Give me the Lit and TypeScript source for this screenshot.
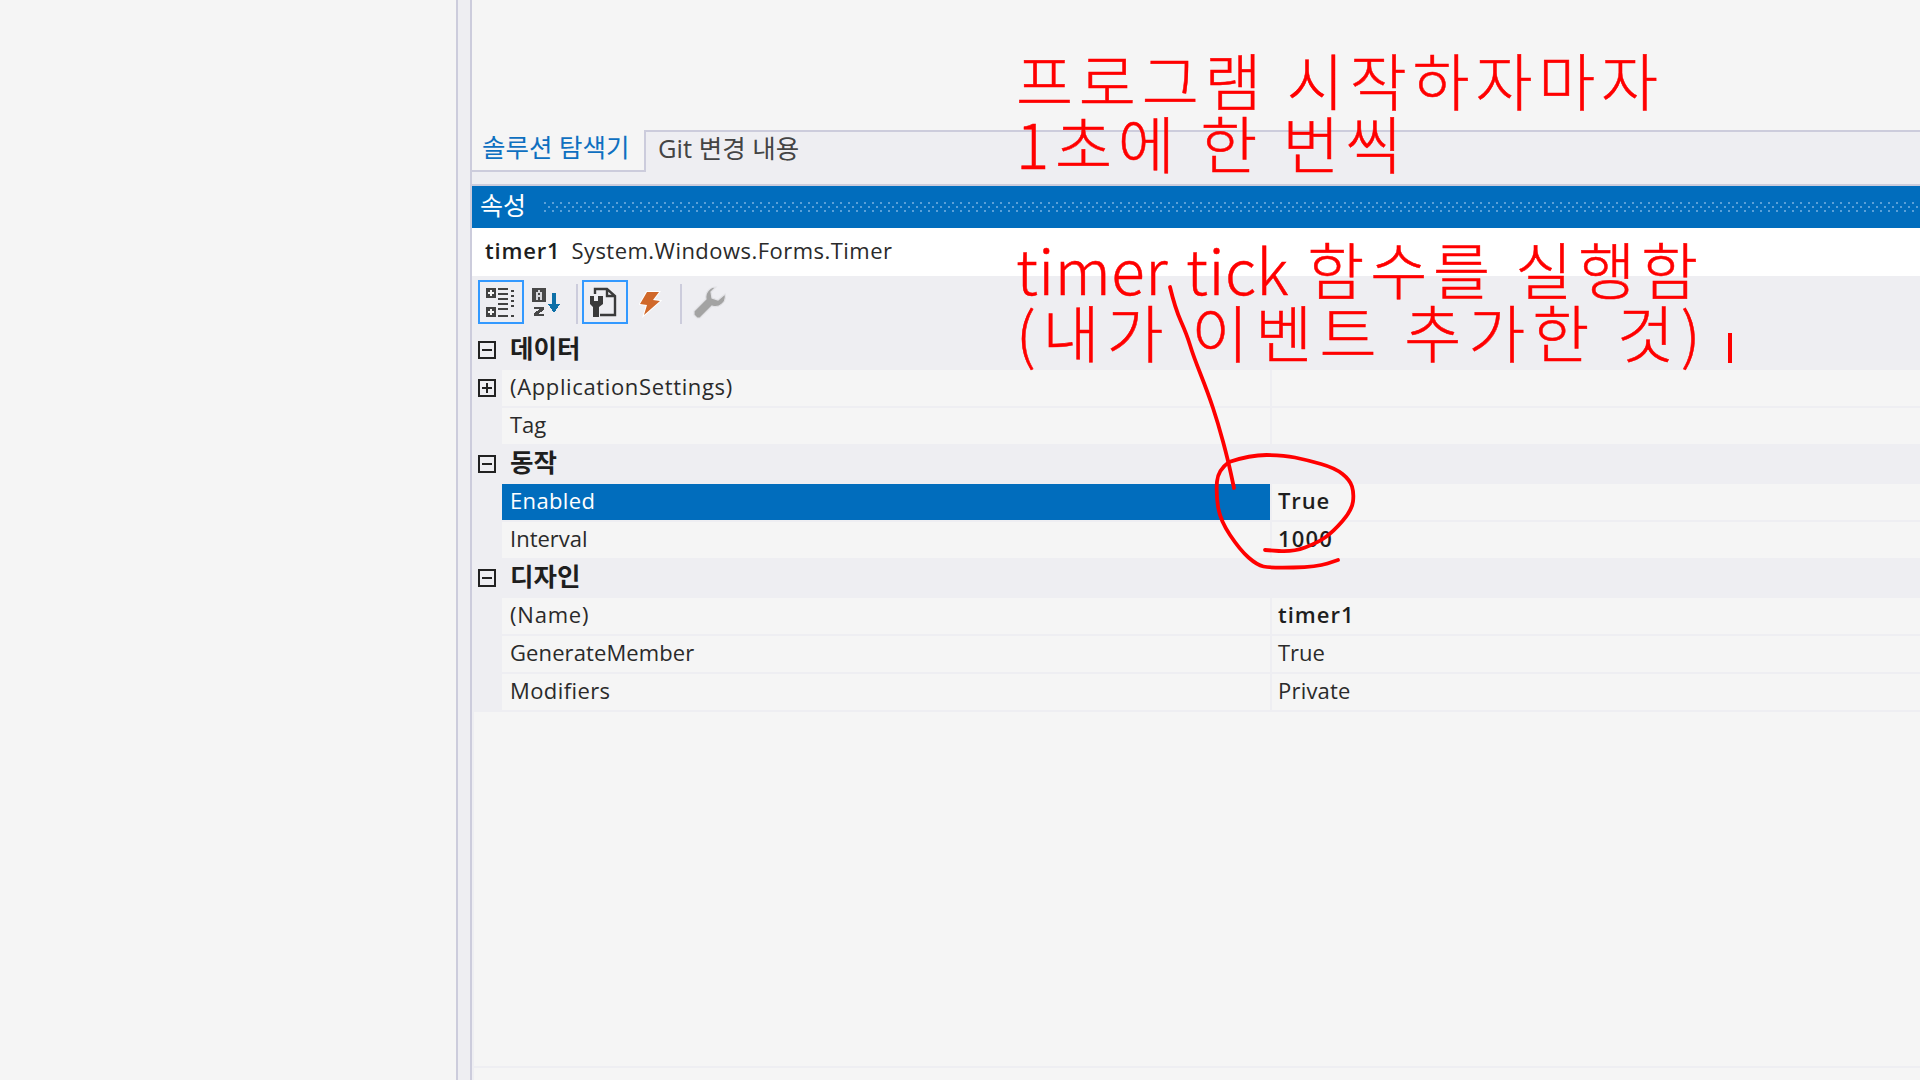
import { LitElement, html, css, svg } from 'lit';
import { customElement } from 'lit/decorators.js';

// sp = letter-spacing in px, so the Latin text runs as wide as in the original font
type Prop = { name: string; sp?: number; value?: string; vsp?: number; bold?: boolean; selected?: boolean; expandable?: boolean };
type Group = { title: string; props: Prop[] };

const GROUPS: Group[] = [
  { title: '데이터', props: [{ name: '(ApplicationSettings)', sp: 0.64, expandable: true }, { name: 'Tag' }] },
  {
    title: '동작',
    props: [
      { name: 'Enabled', sp: 0.35, value: 'True', vsp: 0.9, bold: true, selected: true },
      { name: 'Interval', value: '1000', vsp: 1.2, bold: true },
    ],
  },
  {
    title: '디자인',
    props: [
      { name: '(Name)', sp: 0.8, value: 'timer1', vsp: 1, bold: true },
      { name: 'GenerateMember', sp: 0.1, value: 'True' },
      { name: 'Modifiers', sp: 0.4, value: 'Private', vsp: 0.2 },
    ],
  },
];

// freehand strokes over the screenshot, smoothed through midpoints
const STROKES: number[][][] = [
  [[1170, 287], [1175, 308], [1187, 335], [1193, 355], [1208, 393], [1218, 423], [1228, 460], [1234, 488]],
  [[1229, 462], [1250, 455], [1283, 455], [1307, 460], [1335, 468], [1350, 480], [1354, 493], [1352, 510], [1333, 532], [1317, 543], [1293, 552], [1265, 550]],
  [[1229, 462], [1218, 470], [1216, 493], [1220, 520], [1240, 550], [1257, 565], [1270, 568], [1317, 567], [1338, 560]],
];

function smooth(pts: number[][]) {
  let d = `M${pts[0][0]} ${pts[0][1]}`;
  for (let i = 1; i < pts.length - 1; i++) {
    const mx = (pts[i][0] + pts[i + 1][0]) / 2;
    const my = (pts[i][1] + pts[i + 1][1]) / 2;
    d += ` Q${pts[i][0]} ${pts[i][1]} ${mx} ${my}`;
  }
  const last = pts[pts.length - 1];
  return d + ` L${last[0]} ${last[1]}`;
}

const iconCategorized = html`<svg width="42" height="40" viewBox="0 0 42 40" shape-rendering="crispEdges">
  <path fill="#424242" d="M6 6h10v10H6zM6 25h10v10H6z"/>
  <path fill="#f5f5f5" d="M10 8h2v2h2v2h-2v2h-2v-2H8v-2h2zM10 27h2v2h2v2h-2v2h-2v-2H8v-2h2z"/>
  <path fill="#424242" d="M18 6h10v2H18zM18 11h10v2H18zM18 16h10v2H18zM18 21h10v2H18zM18 26h10v2H18zM18 33h10v2H18zM31 8h3v2h-3zM31 13h3v2h-3zM31 18h3v2h-3zM31 23h3v2h-3zM31 33h3v2h-3z"/>
</svg>`;

const iconAlpha = html`<svg width="34" height="36" viewBox="0 0 34 36" shape-rendering="crispEdges">
  <path fill="#484848" d="M2 4h14v14H2z"/>
  <path fill="#d8d8dc" d="M8 6h2v2h2v8h-2v-3H8v3H6V8h2zM8 9v2h2V9z"/>
  <path fill="#484848" d="M4 23h10v3l-6 4h6v2H4v-3l6-4H4z"/>
  <path fill="#0e70a8" d="M22 9h4v11h4l-6 9-6-9h4z"/>
</svg>`;

const iconPages = html`<svg width="42" height="40" viewBox="0 0 42 40">
  <path fill="none" stroke="#3a3a3a" stroke-width="2.4" d="M11 12V7h12l8 7v19H16M23 7v7h8"/>
  <path fill="#3a3a3a" d="M6 14h4v5h4v-5h5v8l-4 3v10H9V25l-3-3z"/>
</svg>`;

const iconEvents = html`<svg width="24" height="32" viewBox="0 0 24 32">
  <path fill="#d0682a" stroke="#fff" stroke-width="2" paint-order="stroke" d="M8 6h12l-6 8 7 1L5 29l3-10-7-1z"/>
</svg>`;

const iconWrench = html`<svg width="34" height="34" viewBox="0 0 34 34">
  <path fill="#a3a3a3" stroke="#e2e2e6" stroke-width="1.2" d="M24 2a10 10 0 0 0-10 12L2 26v4l3 3h3l12-12a10 10 0 0 0 13-12l-7 6-6-2-1-6z"/>
</svg>`;

@customElement('app-root')
export class AppRoot extends LitElement {
  static styles = css`
    :host {
      display: block;
      position: relative;
      width: 1920px;
      height: 1080px;
      overflow: hidden;
      background: #f5f5f5;
      font-family: 'Open Sans', 'Noto Sans CJK KR', sans-serif;
      font-size: 22px;
      color: #2a2a2a;
    }

    .page { display: flex; height: 1080px; }
    .blank { width: 456px; flex-shrink: 0; }
    .rail {
      width: 12px;
      flex-shrink: 0;
      background: #eeeef2;
      border-left: 2px solid #ccccdc;
      border-right: 2px solid #ccccdc;
    }

    .main { flex: 1; min-width: 0; display: flex; flex-direction: column; }
    .top { height: 130px; flex-shrink: 0; }

    .tabs { display: flex; height: 54px; flex-shrink: 0; background: #eeeef2; font-size: 25.5px; }
    .tab-active {
      width: 174px;
      height: 42px;
      box-sizing: border-box;
      background: #f5f5f5;
      border-right: 2px solid #ccccdc;
      border-bottom: 2px solid #ccccdc;
      padding-left: 10px;
      color: #0e70c0;
      line-height: 34px;
    }
    .tab {
      flex: 1;
      border-top: 2px solid #ccccdc;
      padding-left: 12px;
      line-height: 32px;
      color: #444;
    }

    .title {
      height: 42px;
      flex-shrink: 0;
      border-top: 2px solid #ccccdc;
      background: #016dbd;
      color: #fff;
      display: flex;
      align-items: center;
      padding-left: 8px;
    }
    .title span { width: 64px; flex-shrink: 0; line-height: 38px; font-size: 25px; height: 42px; }
    .dots {
      flex: 1;
      height: 10px;
      background-image:
        radial-gradient(circle at 1px 1px, #5aa0d8 1.2px, transparent 1.2px),
        radial-gradient(circle at 5px 5px, #5aa0d8 1.2px, transparent 1.2px);
      background-size: 8px 8px;
    }

    .object {
      height: 48px;
      flex-shrink: 0;
      background: #fff;
      display: flex;
      align-items: flex-start;
      padding-left: 13px;
      gap: 11px;
      line-height: 44px;
    }
    .object b { font-weight: 600; color: #1e1e1e; letter-spacing: 0.8px; }
    .object span { letter-spacing: 0.47px; }

    .toolbar {
      height: 54px;
      flex-shrink: 0;
      box-sizing: border-box;
      background: #eeeef2;
      display: flex;
      align-items: flex-start;
      padding: 4px 0 0 6px;
    }
    .btn {
      width: 46px;
      height: 44px;
      box-sizing: border-box;
      display: flex;
      align-items: center;
      justify-content: center;
      flex-shrink: 0;
    }
    .btn.on { border: 2px solid #3399ff; }
    .sep { width: 2px; height: 40px; margin: 4px 4px 0 6px; background: #ccccdc; flex-shrink: 0; }

    .grid { flex-shrink: 0; }
    .cat {
      height: 40px;
      display: flex;
      align-items: center;
      background: #eeeef2;
      font-weight: 600;
      font-size: 25.5px;
      color: #1e1e1e;
    }
    .gutter { width: 30px; flex-shrink: 0; display: flex; align-items: center; padding-left: 6px; box-sizing: border-box; }
    .box {
      width: 18px;
      height: 18px;
      box-sizing: border-box;
      border: 2px solid #222;
      position: relative;
      flex-shrink: 0;
    }
    .box::before {
      content: '';
      position: absolute;
      left: 2px;
      right: 2px;
      top: 6px;
      height: 2px;
      background: #222;
    }
    .box.plus::after {
      content: '';
      position: absolute;
      top: 2px;
      bottom: 2px;
      left: 6px;
      width: 2px;
      background: #222;
    }
    .cat .label { padding-left: 8px; height: 40px; line-height: 36px; }

    .row { height: 38px; display: flex; background: #eeeef2; }
    .row.last-in-group { height: 36px; }
    .row .gutter { height: 36px; }
    .name {
      width: 768px;
      height: 36px;
      flex-shrink: 0;
      box-sizing: border-box;
      padding-left: 8px;
      line-height: 33px;
      background: #f5f5f5;
    }
    .name.sel { background: #016dbd; color: #fff; }
    .value {
      flex: 1;
      height: 36px;
      margin-left: 2px;
      padding-left: 6px;
      line-height: 33px;
      background: #f5f5f5;
    }
    .value.bold { font-weight: 600; color: #1e1e1e; }

    .desc {
      flex: 1;
      display: flex;
      flex-direction: column;
      border-left: 2px solid #eeeef2;
    }
    .desc-body { flex: 1; border-bottom: 2px solid #eeeef2; }
    .desc-foot { height: 12px; }

    .note {
      position: absolute;
      left: 1016px;
      color: #ff0000;
      font-family: 'Noto Sans CJK KR', sans-serif;
      font-weight: 300;
      font-size: 62px;
      line-height: 63px;
      white-space: pre;
      letter-spacing: 5.8px;
      -webkit-text-stroke: 0.5px #ff0000;
    }
    .note.a { top: 48px; }
    .note.b { top: 237px; }
    .note .latin { letter-spacing: 0.5px; word-spacing: 4px; }
    .note .wide { letter-spacing: 7px; }
    .caret { position: absolute; left: 1728px; top: 333px; width: 4px; height: 30px; background: #ff0000; }

    .ink { position: absolute; inset: 0; pointer-events: none; }
  `;

  private renderGroup(g: Group) {
    return html`
      <div class="cat">
        <div class="gutter"><span class="box"></span></div>
        <span class="label">${g.title}</span>
      </div>
      ${g.props.map(
        (p, i) => html`
          <div class="row ${i === g.props.length - 1 && g !== GROUPS[2] ? 'last-in-group' : ''}">
            <div class="gutter">${p.expandable ? html`<span class="box plus"></span>` : ''}</div>
            <div class="name ${p.selected ? 'sel' : ''}" style="letter-spacing:${p.sp ?? 0}px">${p.name}</div>
            <div class="value ${p.bold ? 'bold' : ''}" style="letter-spacing:${p.vsp ?? 0}px">${p.value ?? ''}</div>
          </div>
        `,
      )}
    `;
  }

  render() {
    return html`
      <div class="page">
        <div class="blank"></div>
        <div class="rail"></div>
        <div class="main">
          <div class="top"></div>
          <div class="tabs">
            <div class="tab-active">솔루션 탐색기</div>
            <div class="tab">Git 변경 내용</div>
          </div>
          <div class="title"><span>속성</span><div class="dots"></div></div>
          <div class="object"><b>timer1</b><span>System.Windows.Forms.Timer</span></div>
          <div class="toolbar">
            <div class="btn on">${iconCategorized}</div>
            <div class="btn">${iconAlpha}</div>
            <div class="sep"></div>
            <div class="btn on">${iconPages}</div>
            <div class="btn">${iconEvents}</div>
            <div class="sep"></div>
            <div class="btn">${iconWrench}</div>
          </div>
          <div class="grid">${GROUPS.map(g => this.renderGroup(g))}</div>
          <div class="desc">
            <div class="desc-body"></div>
            <div class="desc-foot"></div>
          </div>
        </div>
      </div>
      <div class="note a">프로그램 시작하자마자
1초에 한 번씩</div>
      <div class="note b"><span class="latin">timer tick </span>함수를 실행함
<span class="wide">(내가 이벤트 추가한 것)</span></div>
      <div class="caret"></div>
      <svg class="ink" width="1920" height="1080" viewBox="0 0 1920 1080">
        ${STROKES.map(
          s => svg`<path d=${smooth(s)} fill="none" stroke="#ff0000" stroke-width="3.8" stroke-linecap="round" stroke-linejoin="round"/>`,
        )}
      </svg>
    `;
  }
}

declare global {
  interface HTMLElementTagNameMap { 'app-root': AppRoot; }
}
